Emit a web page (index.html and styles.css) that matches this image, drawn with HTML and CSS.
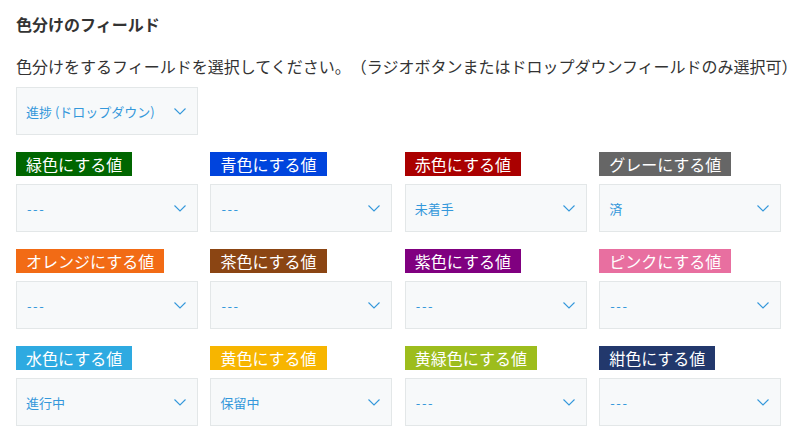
FILE: index.html
```html
<!DOCTYPE html>
<html lang="ja">
<head>
    <meta charset="UTF-8">
    <title>色分けのフィールド</title>
    <link rel="stylesheet" href="styles.css">
</head>
<body>
    <main class="page">
        <h2 class="title">色分けのフィールド</h2>
        <p class="desc">色分けをするフィールドを選択してください。（ラジオボタンまたはドロップダウンフィールドのみ選択可）</p>

        <div class="select select-field">
            <span class="select-text">進捗 (ドロップダウン)</span>
            <svg class="chevron" width="12" height="7" viewBox="0 0 12 7"><polyline points="0.5,0.5 6,6 11.5,0.5"/></svg>
        </div>

        <div class="colors">
            <div class="cell">
                <span class="tag green">緑色にする値</span>
                <div class="select"><span class="select-text empty">---</span><svg class="chevron" width="12" height="7" viewBox="0 0 12 7"><polyline points="0.5,0.5 6,6 11.5,0.5"/></svg></div>
            </div>
            <div class="cell">
                <span class="tag blue">青色にする値</span>
                <div class="select"><span class="select-text empty">---</span><svg class="chevron" width="12" height="7" viewBox="0 0 12 7"><polyline points="0.5,0.5 6,6 11.5,0.5"/></svg></div>
            </div>
            <div class="cell">
                <span class="tag red">赤色にする値</span>
                <div class="select"><span class="select-text">未着手</span><svg class="chevron" width="12" height="7" viewBox="0 0 12 7"><polyline points="0.5,0.5 6,6 11.5,0.5"/></svg></div>
            </div>
            <div class="cell">
                <span class="tag gray">グレーにする値</span>
                <div class="select"><span class="select-text">済</span><svg class="chevron" width="12" height="7" viewBox="0 0 12 7"><polyline points="0.5,0.5 6,6 11.5,0.5"/></svg></div>
            </div>

            <div class="cell">
                <span class="tag orange">オレンジにする値</span>
                <div class="select"><span class="select-text empty">---</span><svg class="chevron" width="12" height="7" viewBox="0 0 12 7"><polyline points="0.5,0.5 6,6 11.5,0.5"/></svg></div>
            </div>
            <div class="cell">
                <span class="tag brown">茶色にする値</span>
                <div class="select"><span class="select-text empty">---</span><svg class="chevron" width="12" height="7" viewBox="0 0 12 7"><polyline points="0.5,0.5 6,6 11.5,0.5"/></svg></div>
            </div>
            <div class="cell">
                <span class="tag purple">紫色にする値</span>
                <div class="select"><span class="select-text empty">---</span><svg class="chevron" width="12" height="7" viewBox="0 0 12 7"><polyline points="0.5,0.5 6,6 11.5,0.5"/></svg></div>
            </div>
            <div class="cell">
                <span class="tag pink">ピンクにする値</span>
                <div class="select"><span class="select-text empty">---</span><svg class="chevron" width="12" height="7" viewBox="0 0 12 7"><polyline points="0.5,0.5 6,6 11.5,0.5"/></svg></div>
            </div>

            <div class="cell">
                <span class="tag cyan">水色にする値</span>
                <div class="select"><span class="select-text">進行中</span><svg class="chevron" width="12" height="7" viewBox="0 0 12 7"><polyline points="0.5,0.5 6,6 11.5,0.5"/></svg></div>
            </div>
            <div class="cell">
                <span class="tag yellow">黄色にする値</span>
                <div class="select"><span class="select-text">保留中</span><svg class="chevron" width="12" height="7" viewBox="0 0 12 7"><polyline points="0.5,0.5 6,6 11.5,0.5"/></svg></div>
            </div>
            <div class="cell">
                <span class="tag lime">黄緑色にする値</span>
                <div class="select"><span class="select-text empty">---</span><svg class="chevron" width="12" height="7" viewBox="0 0 12 7"><polyline points="0.5,0.5 6,6 11.5,0.5"/></svg></div>
            </div>
            <div class="cell">
                <span class="tag navy">紺色にする値</span>
                <div class="select"><span class="select-text empty">---</span><svg class="chevron" width="12" height="7" viewBox="0 0 12 7"><polyline points="0.5,0.5 6,6 11.5,0.5"/></svg></div>
            </div>
        </div>
    </main>
</body>
</html>
```

FILE: styles.css
```css
body {
    margin: 0;
    padding: 0;
    background: #fff;
    color: #333;
    font-family: "Noto Sans CJK JP", "Noto Sans", sans-serif;
}
.page {
    padding: 12px 16px;
}
.title {
    margin: 0;
    font-size: 16px;
    font-weight: bold;
    line-height: 24px;
}
.desc {
    margin: 18px 0 9px 0;
    font-size: 16px;
    line-height: 24px;
    white-space: nowrap;
    text-spacing-trim: space-all;
}
.select {
    box-sizing: border-box;
    width: 182px;
    height: 48px;
    display: flex;
    align-items: center;
    justify-content: space-between;
    padding: 0 11px 0 9px;
    background: #f7f9fa;
    border: 1px solid #e3e7e8;
}
.select-text {
    font-size: 13px;
    color: #3498db;
}
.empty {
    letter-spacing: 1.6px;
    padding-left: 1px;
}
.chevron {
    flex-shrink: 0;
}
.chevron polyline {
    fill: none;
    stroke: #3498db;
    stroke-width: 1.1;
}
.colors {
    margin-top: 17px;
    display: grid;
    grid-template-columns: repeat(4, 182px);
    column-gap: 12.4px;
    row-gap: 17px;
}
.cell {
    display: flex;
    flex-direction: column;
    align-items: flex-start;
    gap: 8px;
}
.tag {
    display: inline-block;
    height: 24px;
    line-height: 24px;
    padding: 0 10px;
    font-size: 16px;
    color: #fff;
    white-space: nowrap;
}
.green { background: #006600; }
.blue { background: #0044dd; }
.red { background: #aa0000; }
.gray { background: #666666; }
.orange { background: #f26b15; }
.brown { background: #8b4513; }
.purple { background: #800080; }
.pink { background: #e86fa0; }
.cyan { background: #2eaae1; }
.yellow { background: #f7b500; }
.lime { background: #9dbd1d; }
.navy { background: #22386c; }
```
